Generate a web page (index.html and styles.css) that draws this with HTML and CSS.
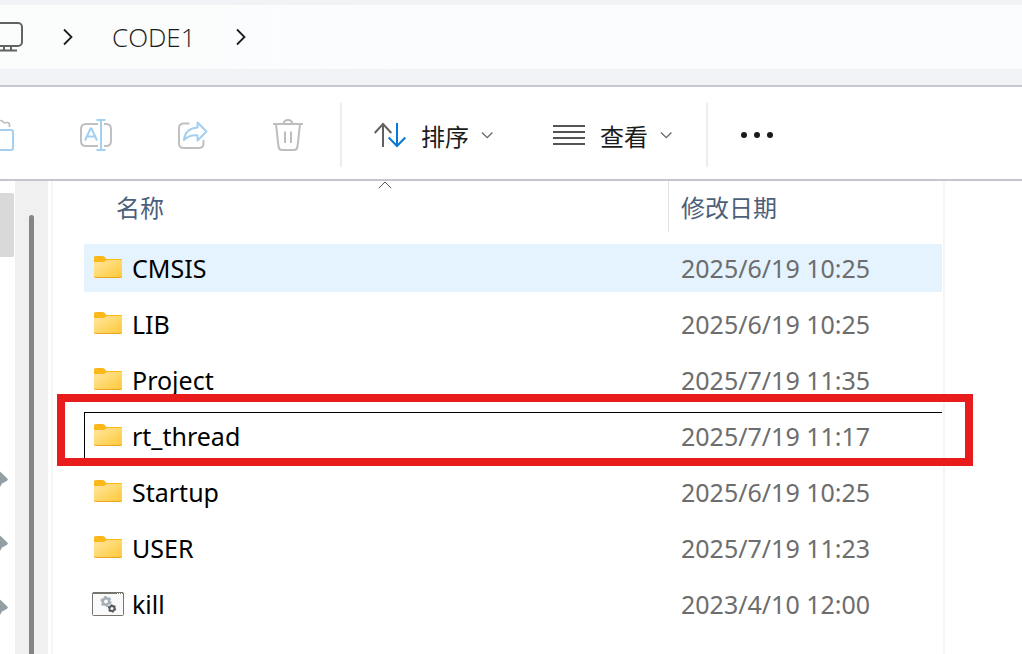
FILE: index.html
```html
<!DOCTYPE html>
<html lang="zh-CN">
<head>
<meta charset="utf-8">
<title>CODE1</title>
<link rel="stylesheet" href="styles.css">
</head>
<body>
<svg class="defs" aria-hidden="true">
  <defs>
    <linearGradient id="fold" x1="0" y1="0" x2="1" y2="1">
      <stop offset="0" stop-color="#ffe7a2"/>
      <stop offset="1" stop-color="#ffc936"/>
    </linearGradient>
    <symbol id="folder" viewBox="0 0 32 32">
      <path d="M2 5.500Q2 4 3.500 4H10.500Q11.500 4 12.300 4.800L14.500 7H29Q30 7 30 8V12H2Z" fill="#fbb917"/>
      <path d="M2 10H11.500Q12.500 10 13.300 9.300L14.200 8.500Q15 8 16 8H30V24.500Q30 26 28.500 26H3.500Q2 26 2 24.500Z" fill="url(#fold)"/>
      <path d="M2.300 24.700Q2.600 25.500 3.500 25.500H28.500Q29.400 25.500 29.700 24.700" fill="none" stroke="#eaa51c"/>
    </symbol>
    <symbol id="down" viewBox="0 0 12 12">
      <path d="M1 3.500L6.200 8.700L11.400 3.500" fill="none" stroke="#666" stroke-width="1.300"/>
    </symbol>
    <symbol id="next" viewBox="0 0 12 18">
      <path d="M2 1.500L9.500 9L2 16.500" fill="none" stroke="#1c1c1c" stroke-width="1.800"/>
    </symbol>
    <symbol id="pin" viewBox="0 0 8 20">
      <path d="M0 1.500L7.300 8.500Q8.200 9.500 7.300 10.500L4.500 12.300L2 13.500L0 17Z" fill="#929da4"/>
    </symbol>
  </defs>
</svg>

<header class="address">
  <nav class="crumbs" aria-label="路径">
    <button class="crumb-device" aria-label="此电脑">
      <svg width="32" height="32" viewBox="0 0 32 32" fill="none" stroke="#606361" stroke-width="2">
        <rect x="1" y="2" width="30" height="23" rx="4"/>
        <path d="M13 25v5M20 25v5M5 29.500H26"/>
      </svg>
    </button>
    <svg class="next" width="12" height="18" aria-hidden="true"><use href="#next"/></svg>
    <button class="crumb">CODE1</button>
    <svg class="next" width="12" height="18" aria-hidden="true"><use href="#next"/></svg>
  </nav>
</header>

<div class="toolbar" role="toolbar" aria-label="命令">
  <div class="actions">
    <button class="action" aria-label="粘贴" disabled>
      <svg width="32" height="32" viewBox="0 0 32 32" fill="none" stroke-width="2">
        <path d="M9 4H5Q3 4 3 6V29H14M9 6V4Q9 1.500 12 1.500H16.500Q19 1.500 19.500 3.500Q20 4 22 3.500H23Q25.500 3.500 25.500 5.500V8" stroke="#bdbdbd" stroke-width="1.700"/>
        <rect x="14.500" y="11" width="14.500" height="20" rx="2" stroke="#a3cff0"/>
      </svg>
    </button>
    <button class="action" aria-label="重命名" disabled>
      <svg width="32" height="32" viewBox="0 0 32 32" fill="none" stroke-width="2">
        <path d="M18 5H6Q1 5 1 10V22Q1 27 6 27H18M24 5H26Q31 5 31 10V22Q31 27 26 27H24" stroke="#c0c0c0"/>
        <path d="M5 21.500L10.500 9.500H11.500L17 21.500M7 17.500H15M21 1V31M16.500 1H25.500M16.500 31H25.500" stroke="#a3cff0"/>
      </svg>
    </button>
    <button class="action" aria-label="共享" disabled>
      <svg width="32" height="32" viewBox="0 0 32 32" fill="none" stroke-width="2">
        <path d="M13.500 4.500H8Q3 4.500 3 9V24.500Q3 29 8 29H22.500Q27.500 29 27.500 24.500V21" stroke="#c0c0c0"/>
        <path d="M21.500 3.500L30.500 12.500L21.500 21.500V16.500Q14 15.500 8 21Q9 9.500 21.500 8.500Z" stroke="#a3cff0" stroke-linejoin="round"/>
      </svg>
    </button>
    <button class="action" aria-label="删除" disabled>
      <svg width="32" height="32" viewBox="0 0 32 32" fill="none" stroke="#bdbdbd" stroke-width="2">
        <path d="M1 5H31M4 5L6.500 27.500Q7 31 10 31H22Q25 31 25.500 27.500L28 5M11.500 5Q12 1 16 1Q20 1 20.500 5"/>
        <path d="M13 12.500V24M19 12.500V24"/>
      </svg>
    </button>
  </div>
  <span class="rule"></span>
  <button class="command">
    <svg width="32" height="32" viewBox="0 0 32 32" fill="none" stroke-width="2">
      <path d="M9 28V5M.700 14L9 5L17.300 14" stroke="#606060"/>
      <path d="M23 4V27M14.700 18.500L23 27L31.300 18.500" stroke="#0878d4"/>
    </svg>
    <span>排序</span>
    <svg class="caret" width="12" height="12" aria-hidden="true"><use href="#down"/></svg>
  </button>
  <button class="command">
    <svg width="32" height="32" viewBox="0 0 32 32" fill="none" stroke="#555" stroke-width="2">
      <path d="M0 7H32M0 13H32M0 19H32M0 25H32"/>
    </svg>
    <span>查看</span>
    <svg class="caret" width="12" height="12" aria-hidden="true"><use href="#down"/></svg>
  </button>
  <span class="rule"></span>
  <button class="command" aria-label="更多">
    <svg width="34" height="32" viewBox="0 0 34 32" fill="#1b1b1b">
      <circle cx="4" cy="16" r="3"/><circle cx="17" cy="16" r="3"/><circle cx="30" cy="16" r="3"/>
    </svg>
  </button>
</div>

<div class="workspace">
  <aside class="sidebar">
    <div class="tree">
      <div class="tree-current"></div>
      <div class="pins">
        <svg width="8" height="20"><use href="#pin"/></svg>
        <svg width="8" height="20"><use href="#pin"/></svg>
        <svg width="8" height="20"><use href="#pin"/></svg>
      </div>
    </div>
    <div class="track"><div class="thumb"></div></div>
  </aside>
  <main class="files">
    <div class="listing">
      <table>
        <thead>
          <tr>
            <th class="col-name"><div class="head">名称</div>
              <svg class="sorted" width="14" height="8" viewBox="0 0 14 8" fill="none" stroke="#555"><path d="M.800 7.200L7 1L13.200 7.200"/></svg>
            </th>
            <th class="col-date"><div class="head">修改日期</div></th>
          </tr>
        </thead>
        <tbody>
          <tr class="hover"><td><div class="file"><svg width="32" height="32"><use href="#folder"/></svg>CMSIS</div></td><td>2025/6/19 10:25</td></tr>
          <tr><td><div class="file"><svg width="32" height="32"><use href="#folder"/></svg>LIB</div></td><td>2025/6/19 10:25</td></tr>
          <tr><td><div class="file"><svg width="32" height="32"><use href="#folder"/></svg>Project</div></td><td>2025/7/19 11:35</td></tr>
          <tr class="focused"><td><div class="file"><svg width="32" height="32"><use href="#folder"/></svg>rt_thread</div></td><td>2025/7/19 11:17</td></tr>
          <tr><td><div class="file"><svg width="32" height="32"><use href="#folder"/></svg>Startup</div></td><td>2025/6/19 10:25</td></tr>
          <tr><td><div class="file"><svg width="32" height="32"><use href="#folder"/></svg>USER</div></td><td>2025/7/19 11:23</td></tr>
          <tr><td><div class="file">
            <svg width="32" height="32" viewBox="0 0 32 32" fill="none">
              <rect x=".500" y="4.500" width="31" height="23" rx="1" fill="#fafafa" stroke="#77736f"/>
              <path d="M1 5H31" stroke="#77736f" stroke-width="2"/>
              <path d="M25 5.500h1M27 5.500h1M29 5.500h1" stroke="#fff"/>
              <circle cx="14" cy="13.500" r="3.200" stroke="#a5afb7" stroke-width="2.600"/>
              <circle cx="14" cy="13.500" r="4.800" stroke="#a5afb7" stroke-width="1.600" stroke-dasharray="2.500 2.527"/>
              <circle cx="20" cy="20.500" r="2.500" stroke="#50585d" stroke-width="1.800"/>
              <circle cx="20" cy="20.500" r="3.600" stroke="#50585d" stroke-width="1.200" stroke-dasharray="1.900 1.870"/>
            </svg>kill</div></td><td>2023/4/10 12:00</td></tr>
        </tbody>
      </table>
      <div class="callout"></div>
    </div>
  </main>
</div>
</body>
</html>
```
FILE: styles.css
```css
* {
  box-sizing: border-box;
}

body {
  margin: 0;
  min-height: 100vh;
  display: flex;
  flex-direction: column;
  overflow: hidden;
  background: #fff;
  color: #000;
  font-family: "Noto Sans", "Noto Sans CJK SC", sans-serif;
  font-size: 25px;
}

.defs {
  position: absolute;
  width: 0;
  height: 0;
}

svg {
  display: block;
  flex: none;
}

button {
  display: flex;
  align-items: center;
  flex: none;
  margin: 0;
  padding: 0;
  border: 0;
  background: none;
  color: #1c1c1c;
  font: inherit;
}

.address {
  padding: 5px 0 16px;
  background: #f2f3f7;
  border-bottom: 2px solid #c3c8d2;
}

.crumbs {
  display: flex;
  align-items: center;
  height: 64px;
  padding-bottom: 1px;
  background: linear-gradient(90deg, #fbfdfc, #fbfcfe 40%);
}

.crumb-device {
  margin-left: -9px;
}

.crumb {
  font-family: "Open Sans", sans-serif;
  font-size: 26px;
  font-weight: 360;
}

.next {
  margin: 0 38px 0 39px;
}

.toolbar {
  display: flex;
  align-items: center;
  height: 94px;
  padding-top: 4px;
  border-bottom: 2px solid #c3c6cf;
}

.actions {
  display: flex;
  flex: none;
  margin-left: -48px;
}

.action {
  width: 96px;
  height: 64px;
  justify-content: center;
}

.rule {
  flex: none;
  width: 2px;
  height: 64px;
  margin: 0 2px 0 4px;
  background: #ededed;
}

.command {
  height: 64px;
  padding: 0 30px;
  font-family: "Noto Sans CJK SC", sans-serif;
  font-size: 24px;
  font-weight: 400;
}

.command span {
  margin-left: 15px;
}

.caret {
  margin-left: 12px;
}

.workspace {
  display: flex;
  flex: 1;
}

.sidebar {
  display: flex;
  flex: none;
  width: 53px;
  padding-right: 3px;
  border-right: 2px solid #f5f5f5;
}

.tree {
  width: 15px;
  padding: 12px 1px 0 0;
}

.tree-current {
  height: 64px;
  border-radius: 0 2px 2px 0;
  background: #d9d9d9;
}

.pins {
  display: grid;
  gap: 44px;
  padding-top: 213px;
}

.track {
  display: flex;
  justify-content: center;
  flex: 1;
  padding-top: 34px;
  background: #f0f0f0;
}

.thumb {
  width: 5px;
  border-radius: 3px 3px 0 0;
  background: #858585;
}

.files {
  display: flex;
  flex: 1;
  padding-left: 31px;
}

.listing {
  position: relative;
  padding-right: 1px;
  border-right: 2px solid #f5f5f5;
}

table {
  border-collapse: separate;
  border-spacing: 0;
  table-layout: fixed;
  width: 858px;
}

th {
  position: relative;
  height: 59px;
  padding: 0;
  vertical-align: top;
  text-align: left;
  color: #4c607a;
  font-family: "Noto Sans CJK SC", sans-serif;
  font-size: 24px;
  font-weight: 400;
}

.col-name {
  width: 585px;
}

.head {
  display: flex;
  align-items: center;
  height: 51px;
  padding-left: 12px;
}

.col-name .head {
  padding-left: 32px;
  border-right: 1px solid #e2e2e2;
}

.sorted {
  position: absolute;
  top: 0;
  left: 294px;
}

td {
  height: 56px;
  padding: 0 0 0 12px;
  border: solid transparent;
  border-width: 4px 0;
  background-clip: padding-box;
  color: #6d6d6d;
  white-space: nowrap;
}

td:first-child {
  padding-left: 8px;
  color: #000;
}

.file {
  display: flex;
  align-items: center;
  gap: 8px;
  height: 48px;
}

.hover td {
  background-color: #e5f3ff;
}

.hover td:first-child {
  border-radius: 2px 0 0 2px;
}

.focused td {
  box-shadow: inset 0 1px #000;
}

.focused td:first-child {
  box-shadow: inset 1px 1px #000;
}

.callout {
  position: absolute;
  top: 213px;
  left: -27px;
  width: 916px;
  height: 72px;
  border: 8px solid #e81c1c;
}
```
